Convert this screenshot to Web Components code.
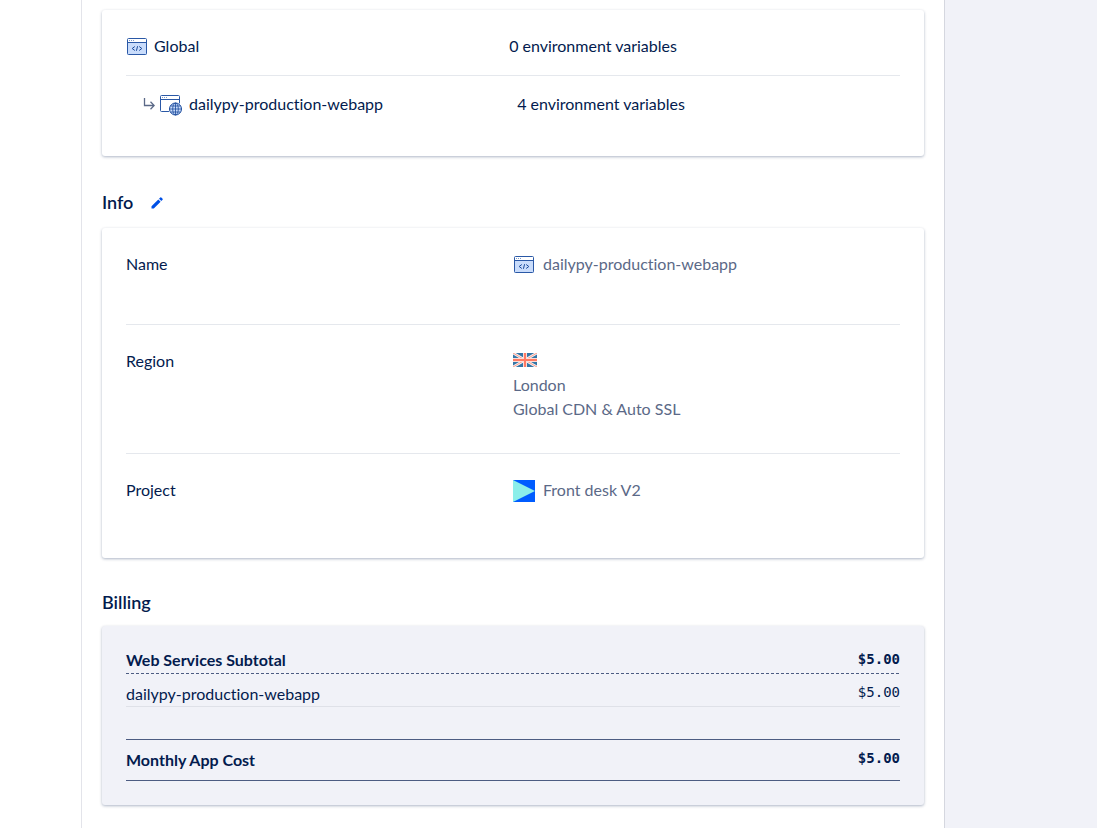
<!DOCTYPE html>
<html lang="en">
<head>
<meta charset="utf-8">
<meta name="viewport" content="width=device-width, initial-scale=1">
<title>App settings</title>
<style>
  :root {
    --ink: #031b4e;
    --muted: #5b6987;
    --rule: #e5e8ed;
    --strong-rule: #4c5c82;
    --panel: #f1f2f8;
  }
  body {
    margin: 0;
    background: #fff;
    color: var(--ink);
    font: 16px/24px Lato, "Open Sans", sans-serif;
    font-variant-ligatures: none;
  }
</style>
</head>
<body>
<app-shell>
  <app-card><env-table></env-table></app-card>

  <section-heading editable>Info</section-heading>
  <app-card>
    <info-row label="Name">
      <value-line><ui-icon name="window"></ui-icon>dailypy-production-webapp</value-line>
      <value-line></value-line>
    </info-row>
    <info-row label="Region">
      <value-line><ui-icon name="flag"></ui-icon></value-line>
      <value-line>London</value-line>
      <value-line>Global CDN &amp; Auto SSL</value-line>
    </info-row>
    <info-row label="Project">
      <value-line><ui-icon name="project"></ui-icon>Front desk V2</value-line>
    </info-row>
  </app-card>

  <section-heading>Billing</section-heading>
  <app-card tinted><cost-table></cost-table></app-card>
</app-shell>

<script>
  const define = (name, html, setup) => {
    const template = document.createElement('template');
    template.innerHTML = html;
    customElements.define(name, class extends HTMLElement {
      constructor() {
        super();
        this.attachShadow({ mode: 'open' }).append(template.content.cloneNode(true));
      }
      connectedCallback() {
        if (setup) setup(this, this.shadowRoot);
      }
    });
  };

  const icons = {
    window: [22, 20, `
      <rect x="1.5" y="1.5" width="19" height="16" rx="1" fill="#fff"/>
      <path d="M1 5h20v12.5H1z" fill="#c9dcfb"/>
      <rect x="1.5" y="1.5" width="19" height="16" rx="1" fill="none" stroke="#2a58a6"/>
      <path d="M2 5.5h18" stroke="#2a58a6"/>
      <path d="M3 3.5h1M5 3.5h1M7 3.5h1" stroke="#7f9bcb"/>
      <path d="M8.8 9.5 6.2 11.5l2.6 2M13.200 9.500l2.600 2-2.600 2M11.600 9.200l-1.200 4.600" fill="none" stroke="#1a4a9c"/>`],
    webapp: [24, 22, `
      <rect x="1.5" y="1.5" width="19" height="16" rx="1" fill="#fff" stroke="#2a58a6"/>
      <path d="M2 5.5h18" stroke="#2a58a6"/>
      <path d="M3 3.5h1M5 3.5h1M7 3.5h1" stroke="#7f9bcb"/>
      <circle cx="16.5" cy="15" r="7" fill="#fff"/>
      <circle cx="16.5" cy="15" r="6" fill="#c9dcfb" stroke="#1a4a9c"/>
      <ellipse cx="16.5" cy="15" rx="2.8" ry="6" fill="none" stroke="#1a4a9c" stroke-width=".8"/>
      <path d="M16.5 9v12M10.5 15h12M11.5 12h10M11.5 18h10" stroke="#1a4a9c" stroke-width=".8"/>`],
    child: [12, 14, `
      <path d="M1.5 1v7.5H11M7.5 4.8l3.7 3.7-3.7 3.7" fill="none" stroke="#5b6987" stroke-width="1.3"/>`],
    pencil: [12, 12, `
      <path d="M.5 9.2 7.3 2.4l2.300 2.300-6.800 6.800H.5zM8 1.700 9.300.4q.5-.4 1 0l1.300 1.300q.4.5 0 1L10.300 4z" fill="#0050e6"/>`],
    flag: [24, 14, `
      <path d="M0 0h24v14H0z" fill="#3475a6"/>
      <path d="M0 0 24 14M24 0 0 14" stroke="#f3f3f5" stroke-width="2.800"/>
      <path d="M0 0 24 14M24 0 0 14" stroke="#ff9b88"/>
      <path d="M12 0v14M0 7h24" stroke="#fbdcd6" stroke-width="4"/>
      <path d="M12 0v14M0 7h24" stroke="#ff7a63" stroke-width="2"/>`],
    project: [22, 22, `
      <path d="M0 0h22v22H0z" fill="#005cff"/>
      <path d="M0 0 22 11 0 22z" fill="#8cefea"/>`]
  };

  define('ui-icon', `
    <style>
      :host { display: inline-flex; flex: none; padding-top: 2px; }
      :host([name="flag"]) { padding: 0 0 2px; }
      :host([name="child"]) { padding: 0; }
      svg { display: block; }
    </style>`, (host, root) => {
      const [w, h, art] = icons[host.getAttribute('name')];
      if (root.querySelector('svg')) return;
      root.innerHTML += `<svg width="${w}" height="${h}" viewBox="0 0 ${w} ${h}" aria-hidden="true">${art}</svg>`;
    });

  define('app-shell', `
    <style>
      :host {
        display: grid;
        grid-template-columns: 81px minmax(0, 1fr) 152px;
        min-height: 100vh;
      }
      main {
        padding: 10px 20px 24px;
        border-left: 1px solid #e3e4ea;
        border-right: 1px solid #d5d7df;
      }
      aside { background: var(--panel); }
    </style>
    <div></div>
    <main><slot></slot></main>
    <aside></aside>`);

  define('app-card', `
    <style>
      :host {
        display: block;
        padding: 24px;
        border-radius: 3px;
        background: #fff;
        box-shadow: 0 1px 3px rgba(3, 27, 78, .32);
      }
      :host([tinted]) { background: var(--panel); }
    </style>
    <slot></slot>`);

  define('section-heading', `
    <style>
      :host {
        display: flex;
        align-items: center;
        gap: 18px;
        margin: 32px 0 12px;
      }
      :host([editable]) { height: 28px; }
      h2 { margin: 0; font-size: 18px; line-height: 24px; font-weight: 600; }
      button { display: flex; padding: 0; border: 0; background: none; cursor: pointer; }
      :host(:not([editable])) button { display: none; }
    </style>
    <h2><slot></slot></h2>
    <button type="button" aria-label="Edit"><ui-icon name="pencil"></ui-icon></button>`);

  define('env-table', `
    <style>
      :host { display: block; }
      table { width: 100%; table-layout: fixed; border-spacing: 0; }
      td { padding: 0; }
      td:first-child { width: 49.5%; }
      .global td { padding-bottom: 17px; border-bottom: 1px solid var(--rule); }
      .child td { padding: 16px 0 16px 8px; }
      .name { display: flex; align-items: center; gap: 6px; }
      .child .name { gap: 4px; padding-left: 9px; }
      .child .name span { padding-left: 2px; }
    </style>
    <table>
      <tr class="global">
        <td><div class="name"><ui-icon name="window"></ui-icon><span>Global</span></div></td>
        <td>0 environment variables</td>
      </tr>
      <tr class="child">
        <td><div class="name"><ui-icon name="child"></ui-icon><ui-icon name="webapp"></ui-icon><span>dailypy-production-webapp</span></div></td>
        <td>4 environment variables</td>
      </tr>
    </table>`);

  define('info-row', `
    <style>
      :host { display: block; }
      :host(:not(:first-child)) { padding-top: 24px; }
      :host(:not(:last-child)) { border-bottom: 1px solid var(--rule); }
      dl { display: grid; grid-template-columns: 1fr 1fr; margin: 0; padding-bottom: 32px; }
      :host([label="Name"]) dl { padding-bottom: 24px; }
      dd { margin: 0; color: var(--muted); }
    </style>
    <dl><dt></dt><dd><slot></slot></dd></dl>`,
    (host, root) => { root.querySelector('dt').textContent = host.getAttribute('label'); });

  define('value-line', `
    <style>
      :host { display: flex; align-items: center; gap: 8px; min-height: 24px; }
    </style>
    <slot></slot>`);

  define('cost-table', `
    <style>
      :host { display: block; }
      table { width: 100%; border-spacing: 0; }
      th, td { padding: 0; text-align: left; vertical-align: top; font-weight: 400; }
      td { text-align: right; font: 14px/20px "DejaVu Sans Mono", "Liberation Mono", monospace; }
      .subtotal > *, .total > * { font-weight: 700; }
      .subtotal th { line-height: 20px; padding-bottom: 4px; }
      .subtotal td { line-height: 18px; }
      .subtotal {
        background: repeating-linear-gradient(90deg, var(--strong-rule) 0 3px, transparent 3px 5px) bottom / 100% 1px no-repeat;
      }
      .item > * { padding-top: 8px; border-bottom: 1px solid #dfe1e8; }
      .space td { height: 32px; }
      .total > * { padding: 8px 0; border: solid var(--strong-rule); border-width: 1px 0; }
    </style>
    <table>
      <tr class="subtotal"><th scope="row">Web Services Subtotal</th><td>$5.00</td></tr>
      <tr class="item"><th scope="row">dailypy-production-webapp</th><td>$5.00</td></tr>
      <tr class="space"><td colspan="2"></td></tr>
      <tr class="total"><th scope="row">Monthly App Cost</th><td>$5.00</td></tr>
    </table>`);
</script>
</body>
</html>
